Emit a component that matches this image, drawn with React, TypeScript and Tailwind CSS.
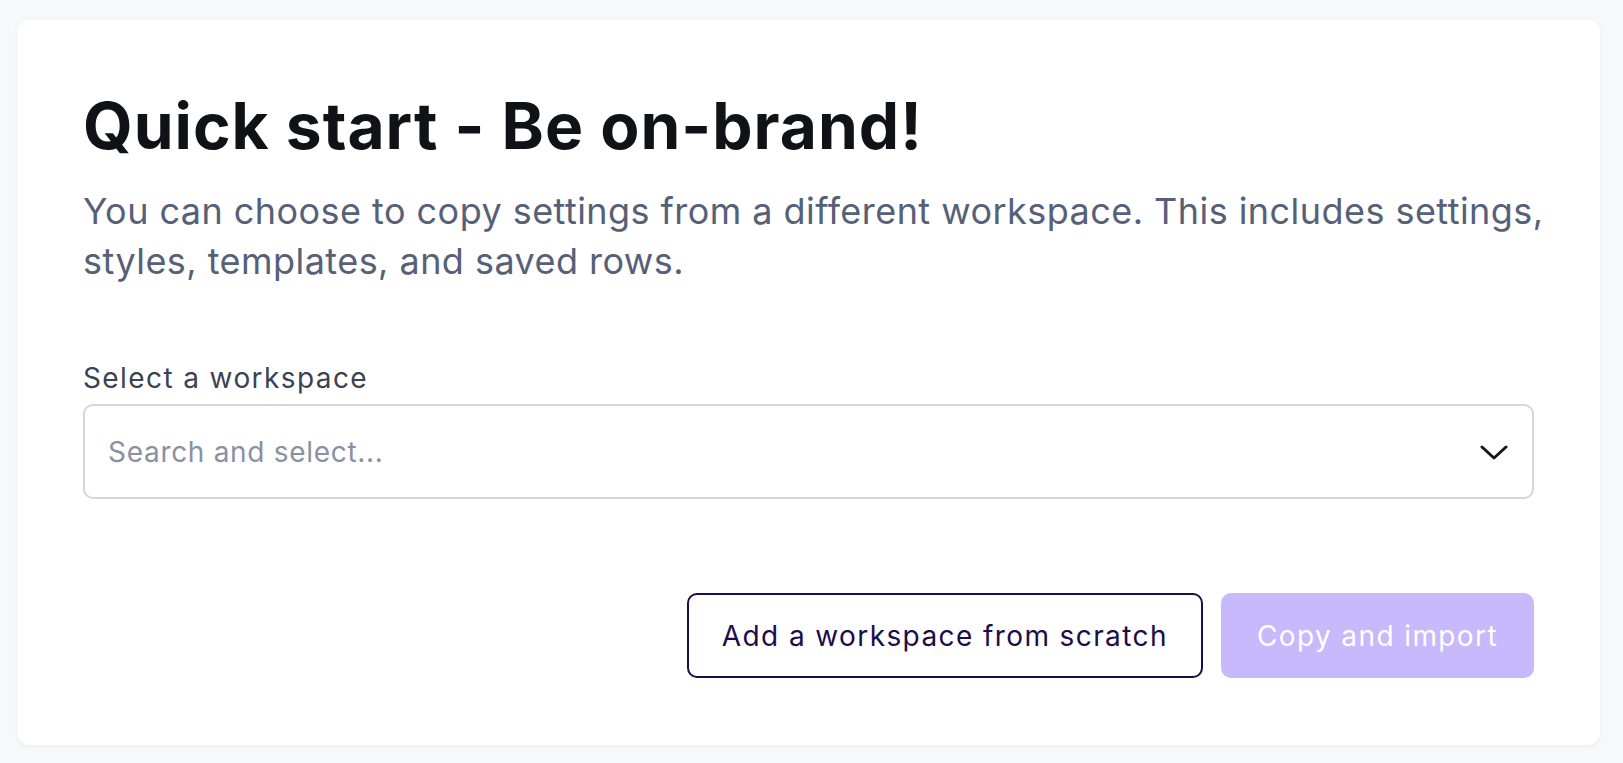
import React from 'react';

const ChevronDown: React.FC = () => (
  <svg width="28" height="16" viewBox="0 0 28 16" fill="none" className="shrink-0">
    <path d="M2 3l12 11L26 3" stroke="#15161c" strokeWidth="3" strokeLinecap="round" strokeLinejoin="round" />
  </svg>
);

export default function App() {
  return (
    <div className="min-h-[763px] bg-[#f7f8fa] pt-[20px] pl-[17px] font-['Inter',sans-serif]">
      <div className="w-[1583px] h-[725px] rounded-[12px] bg-white p-[66px] shadow-[0_1px_4px_rgba(20,25,40,0.06)]">
        <h1 className="text-[64px] leading-[80px] font-bold text-[#111218] tracking-[1px]">
          Quick start - Be on-brand!
        </h1>
        <p className="mt-[20px] mr-[-60px] text-[36px] leading-[50px] text-[#566077] tracking-[0.45px]">
          You can choose to copy settings from a different workspace. This includes settings, styles, templates, and saved rows.
        </p>

        <label className="block mt-[72px] text-[28px] leading-[40px] text-[#3b4253] tracking-[1.4px]">Select a workspace</label>
        <div className="mt-[6px] h-[95px] flex items-center justify-between rounded-[10px] border-2 border-[#d6d6d2] pl-[23px] pr-[24px]">
          <span className="text-[28px] text-[#8a90a3] tracking-[0.7px]">Search and select...</span>
          <ChevronDown />
        </div>

        <div className="mt-[94px] flex justify-end gap-[18px]">
          <button className="h-[85px] px-[33px] rounded-[10px] border-2 border-[#1c0d4a] text-[28px] text-[#1c0d4a] bg-white tracking-[1.4px]">
            Add a workspace from scratch
          </button>
          <button className="h-[85px] px-[36px] rounded-[10px] bg-[#c7b9fb] text-[28px] text-white tracking-[1.4px]">
            Copy and import
          </button>
        </div>
      </div>
    </div>
  );
}
